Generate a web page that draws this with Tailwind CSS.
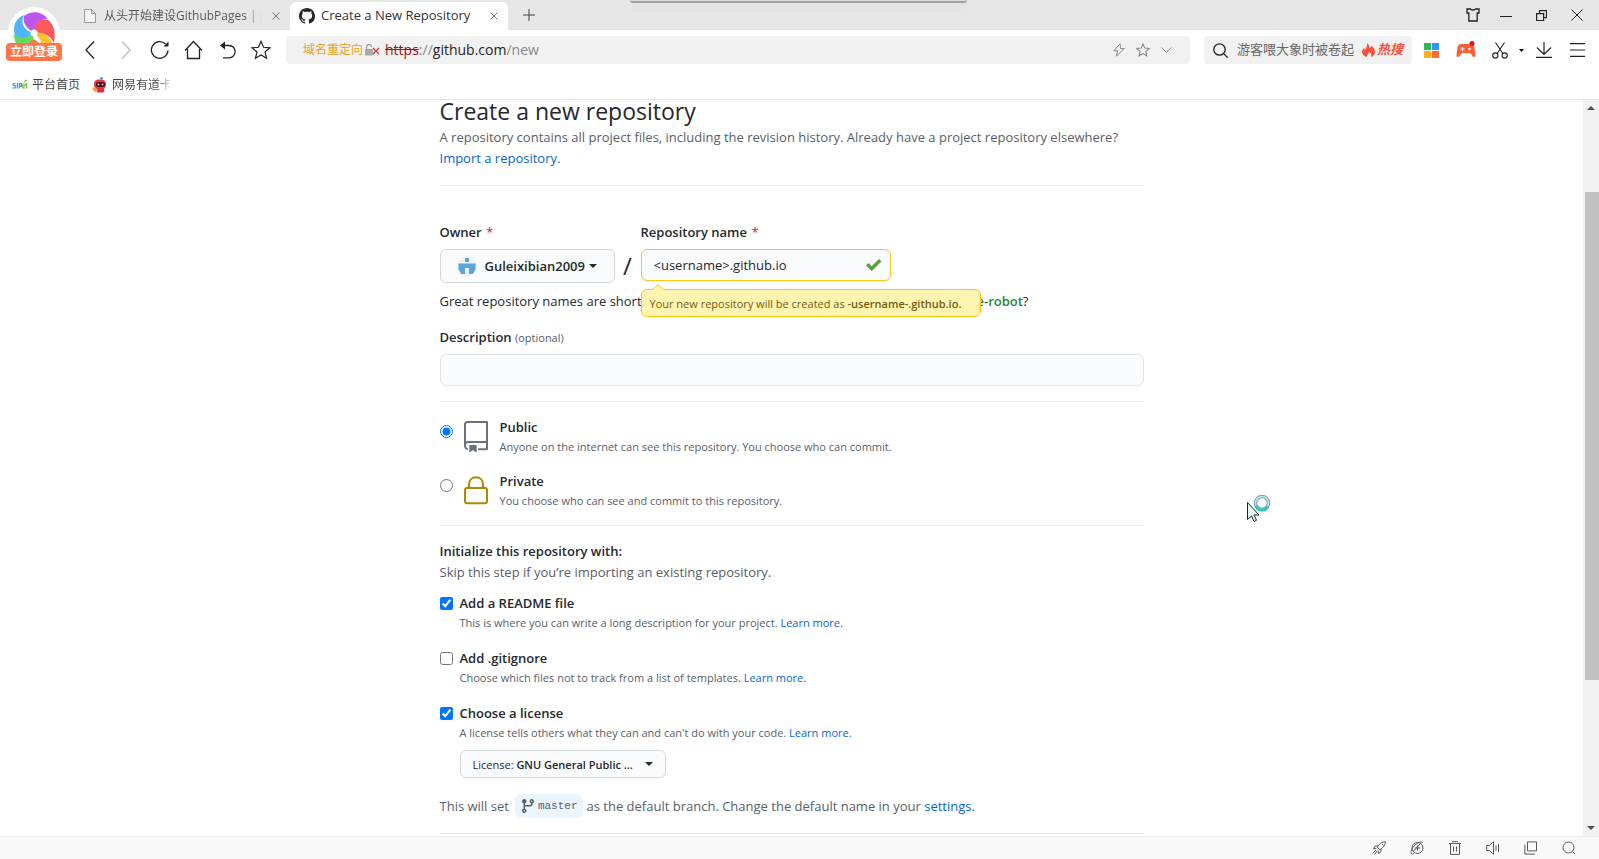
<!DOCTYPE html>
<html lang="en">
<head>
<meta charset="utf-8">
<title>Create a New Repository</title>
<script src="https://cdn.jsdelivr.net/npm/@tailwindcss/browser@4"></script>
</head>
<body class="flex h-screen flex-col overflow-hidden bg-white font-['Open_Sans','Noto_Sans_CJK_SC',sans-serif] text-[13px] text-[#24292e]">

<!-- Browser chrome -->
<header class="relative shrink-0 border-b border-[#e5e5e5]">
  <div class="absolute left-[630px] top-0 h-[3px] w-[337px] rounded-b border-b-2 border-[#a0a2a0] bg-[#dcdedc] shadow-md"></div>

  <div class="flex h-[30px] items-end bg-[#e6e6e6] pl-[76px] text-xs">
    <div class="flex h-7 w-[214px] items-center pl-2 text-[#666]">
      <svg class="mr-2 h-[14px] w-3 shrink-0" viewBox="0 0 12 14" fill="#f5f5f5" stroke="#999"><path d="M.5.5h7l4 4v9H.5zM7.500.5v4h4"/></svg>
      <span class="w-[158px] overflow-hidden whitespace-nowrap bg-linear-to-r from-[#555] from-90% to-transparent bg-clip-text text-transparent">从头开始建设GithubPages | g</span>
      <button class="ml-[10px]" aria-label="Close tab"><svg class="size-2" viewBox="0 0 8 8" stroke="#777"><path d="M.5.5l7 7M7.500.5l-7 7"/></svg></button>
    </div>
    <div class="flex h-7 w-[218px] items-center rounded-t-md bg-white pl-[9px] text-[13px] text-[#333]">
      <svg class="mr-[6px] size-4 shrink-0" viewBox="0 0 16 16" fill="#24292e"><path d="M8 0C3.580 0 0 3.580 0 8c0 3.540 2.290 6.530 5.470 7.590.4.070.550-.17.550-.38 0-.19-.010-.82-.010-1.490-2.010.370-2.530-.49-2.690-.94-.09-.23-.48-.94-.82-1.130-.28-.15-.68-.52-.010-.53.630-.010 1.080.580 1.230.820.720 1.210 1.870.870 2.330.660.070-.52.280-.87.510-1.070-1.780-.2-3.640-.89-3.640-3.950 0-.87.310-1.590.820-2.150-.08-.2-.36-1.020.080-2.120 0 0 .670-.21 2.200.820.640-.18 1.320-.27 2-.27s1.360.090 2 .270c1.530-1.040 2.200-.82 2.200-.82.440 1.100.160 1.920.080 2.120.510.560.820 1.270.820 2.150 0 3.070-1.870 3.750-3.650 3.950.290.250.540.730.540 1.480 0 1.070-.010 1.930-.010 2.200 0 .210.150.460.550.380A8.010 8.010 0 0016 8c0-4.420-3.580-8-8-8z"/></svg>
      <span class="w-[165px] whitespace-nowrap">Create a New Repository</span>
      <button class="ml-1" aria-label="Close tab"><svg class="size-2" viewBox="0 0 8 8" stroke="#777"><path d="M.5.5l7 7M7.500.5l-7 7"/></svg></button>
    </div>
    <button class="ml-[15px] self-center" aria-label="New tab"><svg class="size-3" viewBox="0 0 12 12" stroke="#444"><path d="M6 0v12M0 6h12"/></svg></button>
    <div class="ml-auto flex items-center gap-5 self-center pr-4">
      <button aria-label="Skins"><svg class="size-[14px]" viewBox="0 0 14 14" fill="none" stroke="#222" stroke-width="1.300"><path d="M1 1h3.500c.5 1.300 4.500 1.300 5 0H13v4h-1.800v8H2.800V5H1z"/></svg></button>
      <button aria-label="Minimise"><svg class="h-3 w-3" viewBox="0 0 12 12" stroke="#222"><path d="M0 7.500h12"/></svg></button>
      <button class="ml-1" aria-label="Restore"><svg class="size-[11px]" viewBox="0 0 11 11" fill="none" stroke="#222" stroke-width="1.200"><path d="M.6 3.600h7v7h-7zM3.500 3.500V.6h7v7H7.600"/></svg></button>
      <button class="ml-1" aria-label="Close"><svg class="size-3" viewBox="0 0 12 12" stroke="#222"><path d="M.5.5l11 11M11.500.5l-11 11"/></svg></button>
    </div>
  </div>

  <div class="flex h-10 items-center pl-[85px] pr-[14px]">
    <nav class="flex w-[201px] shrink-0 items-center" aria-label="Navigation">
      <button class="w-9" aria-label="Back"><svg class="h-[18px] w-[10px]" viewBox="0 0 10 18" fill="none" stroke="#222" stroke-width="1.300"><path d="M9 .5L1 9l8 8.500"/></svg></button>
      <button class="w-[29px]" aria-label="Forward"><svg class="h-[18px] w-[10px]" viewBox="0 0 10 18" fill="none" stroke="#bbb" stroke-width="1.300"><path d="M1 .5L9 9l-8 8.500"/></svg></button>
      <button class="w-[34px]" aria-label="Reload"><svg class="size-5" viewBox="0 0 20 20" fill="none" stroke="#222" stroke-width="1.300"><path d="M15.500 4A8.300 8.300 0 1 0 18 10.500"/><path d="M18.500 1.500v5h-5z" fill="#222" stroke="none"/></svg></button>
      <button class="w-9" aria-label="Home"><svg class="h-5 w-[19px]" viewBox="0 0 19 20" fill="none" stroke="#222" stroke-width="1.300"><path d="M1 10.500L9.500 1.500l8.500 9M3.500 9v9.500h12V9"/></svg></button>
      <button class="w-[31px]" aria-label="Undo"><svg class="h-[18px] w-4" viewBox="0 0 16 18" fill="none" stroke="#222" stroke-width="1.300"><path d="M3 4.500h6a6 6 0 0 1 0 12.300H3"/><path d="M0 4.500L5 .5v8z" fill="#222" stroke="none"/></svg></button>
      <button aria-label="Bookmark"><svg class="size-5" viewBox="0 0 20 20" fill="none" stroke="#222" stroke-width="1.200"><path d="M10 1.300l2.500 6 6.500.5-5 4.200 1.600 6.300L10 15l-5.600 3.300L6 12 1 7.800l6.500-.5z"/></svg></button>
    </nav>
    <div class="flex h-7 min-w-0 flex-1 items-center rounded-sm bg-[#f1f1f1] pl-[17px] pr-[18px]">
      <span class="text-xs text-[#f0a020]">域名重定向</span>
      <svg class="ml-[2px] mr-[5px] h-3 w-[15px]" viewBox="0 0 15 12"><path d="M1.500 5V3a2.500 2.500 0 0 1 5 0" fill="none" stroke="#999" stroke-width="1.200"/><rect y="5" width="8" height="6.500" rx="1" fill="#aaa"/><path d="M8 4l6 6M14 4l-6 6" stroke="#e03030" stroke-width="1.300"/></svg>
      <span class="whitespace-nowrap text-sm text-[#888]"><span class="text-[#9c1414] line-through">https</span>://<span class="text-[#222]">github.com</span>/new</span>
      <div class="ml-auto flex items-center gap-[11px] text-[#888]">
        <button aria-label="Turbo mode"><svg class="h-[14px] w-3" viewBox="0 0 12 14" fill="none" stroke="currentColor"><path d="M7 .8L.8 7.800h3.700L3.500 13.200l7.700-7.700H7.500z"/></svg></button>
        <button aria-label="Add to favourites"><svg class="size-[14px]" viewBox="0 0 20 20" fill="none" stroke="currentColor" stroke-width="1.500"><path d="M10 1.300l2.500 6 6.500.5-5 4.200 1.600 6.300L10 15l-5.600 3.300L6 12 1 7.800l6.500-.5z"/></svg></button>
        <button aria-label="Show history"><svg class="h-[6px] w-[11px]" viewBox="0 0 11 6" fill="none" stroke="currentColor"><path d="M.5.5l5 5 5-5"/></svg></button>
      </div>
    </div>
    <div class="ml-[14px] flex h-7 w-[208px] items-center rounded-sm bg-[#f1f1f1] pl-[9px] text-[#666]">
      <svg class="mr-[9px] size-[15px]" viewBox="0 0 15 15" fill="none" stroke="#222" stroke-width="1.300"><circle cx="6.500" cy="6.500" r="5.700"/><path d="M10.600 10.600l4 4"/></svg>
      <span class="w-[125px] whitespace-nowrap">游客喂大象时被卷起</span>
      <svg class="h-[14px] w-[13px]" viewBox="0 0 13 14" fill="#ff4f3c"><path d="M5 0c3 2.500 2 4 3 5 1-.5 1-1.500 1-2.500C12 4.500 13 7 13 9c0 2.500-1.500 4-4 5 1-2 0-4-2-5.500 0 2-2.500 3-2 5.500C2 13.500 0 11.500 0 9c0-2 1-3 2-4l.8 2C4.500 5 5.500 3 5 0z"/></svg>
      <span class="ml-[2px] font-bold italic text-[#ff4f3c]">热搜</span>
    </div>
    <div class="ml-3 flex items-center">
      <button class="w-8" aria-label="Apps"><svg class="size-[15px]" viewBox="0 0 15 15"><path fill="#2fb457" d="M0 0h7v7H0z"/><path fill="#2a97fb" d="M8 0h7v7H8z"/><path fill="#ffb119" d="M0 8h7v7H0z"/><path fill="#ff6a3c" d="M8 8h7v7H8z"/></svg></button>
      <button class="w-9" aria-label="Games"><svg class="h-[18px] w-5" viewBox="0 0 20 18"><path fill="#ff5f33" d="M5 3h10c3 0 3.500 3 4 7s1 6-1 6-2.500-4-5-4H7c-2.500 0-3 4-5 4s-1.500-2-1-6 1-7 4-7z"/><path stroke="#fff" stroke-width="1.200" d="M4.500 8h4M6.500 6v4"/><circle cx="13.500" cy="8" r="1.300" fill="#fff"/><circle cx="16" cy="2.500" r="2.500" fill="#e8141c"/></svg></button>
      <button class="flex w-11 items-center gap-[11px]" aria-label="Screenshot"><svg class="h-[17px] w-4" viewBox="0 0 16 17" fill="none" stroke="#222" stroke-width="1.100"><path d="M3.500.5l7.300 11M12.500.5l-7.300 11"/><circle cx="3.300" cy="13.500" r="2.600"/><circle cx="12.700" cy="13.500" r="2.600"/></svg><svg class="h-[3px] w-[5px]" viewBox="0 0 5 3"><path d="M0 0h5L2.500 3z"/></svg></button>
      <button class="w-[34px]" aria-label="Downloads"><svg class="size-4" viewBox="0 0 16 16" fill="none" stroke="#222" stroke-width="1.200"><path d="M8 0v12.500M1 5.500l7 7 7-7M0 15.400h16"/></svg></button>
      <button aria-label="Menu"><svg class="h-[14px] w-[15px]" viewBox="0 0 15 14" stroke="#222" stroke-width="1.200"><path d="M0 .6h15M0 7h15M0 13.400h15"/></svg></button>
    </div>
  </div>

  <div class="flex h-[29px] items-center pl-3 text-xs text-[#444]">
    <a href="#" class="flex items-center"><svg class="mr-1 h-3 w-4" viewBox="0 0 16 12" fill="none" stroke-width="1.200"><path stroke="#2a9fc8" d="M3.500 4.500H1.200v2h2v2.500H.5M5.300 4v5.500M7.300 9.500v-5h2v2.800h-2"/><path stroke="#7cc13e" d="M10 7h3.300V5H10.700v4h2.500M14.700 4v5.500M12 2.500l3-1.500"/></svg>平台首页</a>
    <a href="#" class="ml-3 flex items-center"><svg class="mr-1 size-4" viewBox="0 0 16 16"><rect x="2" y="2.500" width="12" height="10" rx="4.500" fill="#ee3350"/><rect x="5" y="11" width="7" height="4.500" rx="1" fill="#e22945"/><rect x="4" y="5" width="9" height="5" rx="2.500" fill="#32151c"/><circle cx="6.500" cy="7.500" r="1" fill="#ffc38a"/><circle cx="10.500" cy="7.500" r="1" fill="#ffc38a"/><circle cx="9.500" cy="1.300" r="1.300" fill="#4c8cf0"/><path fill="#ff9b2e" d="M0 12l3-2 3 3-3 2z"/></svg><span class="bg-linear-to-r from-[#444] from-75% to-transparent bg-clip-text text-transparent">网易有道卡</span></a>
  </div>

  <!-- Profile badge -->
  <button class="absolute left-[6px] top-[6px] flex h-[55px] w-14 flex-col items-center justify-end" aria-label="立即登录">
    <svg class="absolute left-[1px] top-0 size-[54px]" viewBox="0 0 54 54"><circle cx="27" cy="27" r="26" fill="#fff"/>
      <path fill="#4fb4fb" d="M27 27C17 25 13 17 17 9 9 12 5 20 8 29c4 5 12 4 19-2z"/>
      <path fill="#be55ee" d="M27 27c-6-4-12-9-10-17 7-6 18-5 24 3-6-1-13 4-14 14z"/>
      <path fill="#fb5a5c" d="M27 27c0-9 6-16 14-13 6 4 8 13 6 23-3-6-9-11-20-10z"/>
      <path fill="#ffbe2e" d="M27 27c9-2 15 2 19 12L34 45c2-8-1-14-7-18z"/>
      <path fill="#62d860" d="M27 27C20 33 12 33 7 28c0 6 2 10 6 14h12z"/>
      <circle cx="27" cy="27" r="3.500" fill="#fff"/></svg>
    <svg class="relative h-[5px] w-[10px]" viewBox="0 0 10 5" fill="#ff7547"><path d="M0 5l5-4 5 4z"/></svg>
    <span class="relative flex h-[18px] w-14 items-center justify-center rounded-sm bg-[#ff7547] text-xs font-bold text-white">立即登录</span>
  </button>
</header>

<!-- Page viewport -->
<div class="flex min-h-0 flex-1">
  <main class="min-w-0 flex-1 overflow-hidden">
    <form class="mx-auto -mt-[5px] max-w-[704px] leading-[21px]">
      <h1 class="text-[23px] leading-8">Create a new repository</h1>
      <p class="text-[#586069]">A repository contains all project files, including the revision history. Already have a project repository elsewhere?<br><a href="#" class="text-[#0366d6]">Import a repository.</a></p>
      <hr class="mb-9 mt-4 border-[#e8eaed]">

      <div class="relative flex items-start">
        <div class="flex w-[175px] flex-col gap-[6px]">
          <label for="owner" class="font-semibold">Owner <span class="ml-px font-medium text-[#cb2431]">*</span></label>
          <button id="owner" type="button" class="flex h-[34px] items-center whitespace-nowrap rounded-md border border-[#d5d8da] bg-[#fafbfc] pl-4 font-semibold">
            <svg class="mr-2 size-5 shrink-0" viewBox="0 0 20 20"><circle cx="10" cy="10" r="10" fill="#f0f0f0"/><path fill="#5aa6da" d="M8 2h4v4H8zM1.500 7.500h17V13l-2.500 5h-4v-6H8v6H4l-2.500-5z"/></svg>
            Guleixibian2009
            <svg class="ml-1 h-1 w-2" viewBox="0 0 8 4" fill="#24292e"><path d="M0 0h8L4 4z"/></svg>
          </button>
        </div>
        <div class="mt-7 w-[26px] text-center text-2xl leading-8">/</div>
        <div class="flex w-[250px] flex-col gap-[6px]">
          <label for="repo" class="font-semibold">Repository name <span class="ml-px font-medium text-[#cb2431]">*</span></label>
          <div class="flex h-8 items-center rounded-md border border-[#f9c513] bg-[#fafbfc] px-3">
            <input id="repo" type="text" value="&lt;username&gt;.github.io" class="min-w-0 flex-1 outline-none">
            <svg class="-mr-1 h-3 w-4" viewBox="0 0 16 12" fill="#55a532"><path d="M0 6.500L2.500 4l3.200 3.200L13 0l2.500 2.500L5.700 12z"/></svg>
          </div>
        </div>
        <div class="absolute left-[201px] top-[67px] h-7 min-w-[340px] whitespace-nowrap rounded-md border border-[#f9c513] bg-[#fff5b1] px-2 text-[11px] leading-7 text-[#735c0f]">
          <svg class="absolute -top-[6px] left-[10px] h-[6px] w-3" viewBox="0 0 12 6"><path d="M0 6l6-5.300L12 6" fill="#fff5b1" stroke="#f9c513"/></svg>
          Your new repository will be created as <b class="font-semibold">-username-.github.io.</b>
        </div>
      </div>
      <p class="mt-2 whitespace-nowrap">Great repository names are short and memorable. Need inspiration? How about <b class="font-semibold text-[#22863a]">adorable-robot</b>?</p>

      <label for="desc" class="mt-[15px] block font-semibold">Description <span class="text-[11px] font-medium text-[#586069]">(optional)</span></label>
      <input id="desc" type="text" class="mt-[6px] block h-8 w-full rounded-md border border-[#e1e4e8] bg-[#fafbfc] px-3">
      <hr class="my-[15px] border-[#e8eaed]">

      <div class="flex items-start">
        <input id="public" name="visibility" type="radio" checked class="mt-2 size-[13px] accent-[#0075ff]">
        <svg class="ml-[7px] mr-2 mt-1 size-8" viewBox="0 0 24 24" fill="#6a737d"><path d="M3 2.750A2.750 2.750 0 0 1 5.750 0h14.500a.75.75 0 0 1 .75.750v20.500a.75.75 0 0 1-.75.750h-6a.75.75 0 0 1 0-1.500h5.250v-4H6A1.500 1.500 0 0 0 4.500 18v.750c0 .716.430 1.334 1.050 1.605a.75.75 0 0 1-.6 1.374A3.251 3.251 0 0 1 3 18.750ZM19.500 1.500H5.750c-.69 0-1.250.560-1.250 1.250v12.651A2.989 2.989 0 0 1 6 15h13.500Z"/><path d="M7 18.250a.25.25 0 0 1 .25-.25h5a.25.25 0 0 1 .25.250v5.010a.25.25 0 0 1-.397.201l-2.206-1.604a.25.25 0 0 0-.294 0L7.397 23.460a.25.25 0 0 1-.397-.2z"/></svg>
        <label for="public"><span class="block font-semibold">Public</span><span class="block text-[11px] leading-[18px] text-[#586069]">Anyone on the internet can see this repository. You choose who can commit.</span></label>
      </div>
      <div class="mt-[15px] flex items-start">
        <input id="private" name="visibility" type="radio" class="mt-2 size-[13px] accent-[#0075ff]">
        <svg class="ml-[7px] mr-2 mt-1 size-8" viewBox="0 0 24 24" fill="none" stroke="#b08800" stroke-width="1.500"><rect x="3.750" y="9.750" width="16.500" height="11.500" rx="1.500"/><path d="M6.750 9.500V7c0-3 2-5.250 5.250-5.250S17.250 4 17.250 7v2.500"/></svg>
        <label for="private"><span class="block font-semibold">Private</span><span class="block text-[11px] leading-[18px] text-[#586069]">You choose who can see and commit to this repository.</span></label>
      </div>
      <hr class="my-[15px] border-[#e8eaed]">

      <h2 class="font-semibold">Initialize this repository with:</h2>
      <p class="text-[#586069]">Skip this step if you’re importing an existing repository.</p>

      <div class="mt-[10px] flex items-start gap-[7px]">
        <input id="readme" type="checkbox" checked class="mt-1 size-[13px] accent-[#0075ff]">
        <div><label for="readme" class="block font-semibold">Add a README file</label><p class="text-[11px] leading-[18px] text-[#586069]">This is where you can write a long description for your project. <a href="#" class="text-[#0366d6]">Learn more.</a></p></div>
      </div>
      <div class="mt-4 flex items-start gap-[7px]">
        <input id="ignore" type="checkbox" class="mt-1 size-[13px] accent-[#0075ff]">
        <div><label for="ignore" class="block font-semibold">Add .gitignore</label><p class="text-[11px] leading-[18px] text-[#586069]">Choose which files not to track from a list of templates. <a href="#" class="text-[#0366d6]">Learn more.</a></p></div>
      </div>
      <div class="mt-4 flex items-start gap-[7px]">
        <input id="license" type="checkbox" checked class="mt-1 size-[13px] accent-[#0075ff]">
        <div><label for="license" class="block font-semibold">Choose a license</label><p class="text-[11px] leading-[18px] text-[#586069]">A license tells others what they can and can't do with your code. <a href="#" class="text-[#0366d6]">Learn more.</a></p>
          <button type="button" class="mt-2 flex h-7 w-[206px] items-center justify-between whitespace-nowrap rounded-md border border-[#d5d8da] bg-[#fafbfc] px-3 text-[11px] font-medium"><span>License: <b class="font-semibold">GNU General Public ...</b></span><svg class="h-1 w-2" viewBox="0 0 8 4" fill="#24292e"><path d="M0 0h8L4 4z"/></svg></button>
        </div>
      </div>
      <p class="mt-4 flex h-6 items-center whitespace-nowrap text-[#586069]">This will set
        <span class="ml-[6px] mr-1 flex h-6 items-center rounded-md bg-[#eaf5ff] px-[5px] font-['Liberation_Mono',monospace] text-[11px]"><svg class="mr-[2px] size-4" viewBox="0 0 16 16" fill="#586069"><path d="M11.750 2.500a.75.75 0 100 1.500.75.75 0 000-1.500zm-2.250.750a2.250 2.250 0 113 2.122V6A2.500 2.500 0 0110 8.500H6a1 1 0 00-1 1v1.128a2.251 2.251 0 11-1.500 0V5.372a2.250 2.250 0 111.500 0v1.836A2.492 2.492 0 016 7h4a1 1 0 001-1v-.628A2.250 2.250 0 019.500 3.250zM4.250 12a.75.75 0 100 1.500.75.75 0 000-1.500zM3.500 3.250a.75.75 0 111.500 0 .75.75 0 01-1.500 0z"/></svg>master</span>
        <span>as the default branch. Change the default name in your <a href="#" class="text-[#0366d6]">settings</a>.</span></p>
      <hr class="mt-[15px] border-[#e1e4e8]">
    </form>
  </main>

  <!-- Scrollbar -->
  <div class="flex w-4 shrink-0 flex-col items-center bg-[#f1f1f1] py-[6px]">
    <svg class="h-1 w-2" viewBox="0 0 8 4" fill="#505050"><path d="M0 4h8L4 0z"/></svg>
    <div class="flex w-full flex-1 flex-col items-end pt-[82px]"><div class="h-[77%] w-[14px] bg-[#c1c1c1]"></div></div>
    <svg class="h-1 w-2" viewBox="0 0 8 4" fill="#505050"><path d="M0 0h8L4 4z"/></svg>
  </div>
</div>

<!-- Status bar -->
<footer class="flex h-[23px] shrink-0 items-center justify-end gap-6 border-t border-[#ececec] bg-[#f9f9f9] pr-[23px] text-[#555862]">
  <button aria-label="Boost"><svg class="size-[14px]" viewBox="0 0 14 14" fill="none" stroke="currentColor"><path d="M13.300.7c-3 0-5.500 1.500-8 5.500l2.500 2.500c4-2.500 5.500-5 5.500-8zM6 5H3.500L1.500 7.500l3 .3M9 8v2.500L6.500 12.500l-.3-3M4 9l-3.500 3.500M5 10l-2.500 3.500M10 3l1.500 1.500"/></svg></button>
  <button aria-label="Compatibility"><svg class="size-[14px]" viewBox="0 0 14 14" fill="none" stroke="currentColor"><circle cx="7.500" cy="7" r="5.500"/><path d="M12.500 1.500C10-.5 3 4 1.300 9.500.5 13 2 13.500 4 12.500M4.800 7h5.500M7.500 4.300v5.500M11 2L3.500 10"/></svg></button>
  <button aria-label="Clear data"><svg class="size-[14px]" viewBox="0 0 14 14" fill="none" stroke="currentColor"><path d="M4 .6h6M1 2.500h12M2.500 2.500v10.900h9V2.500M5.500 5.500v5M8.500 5.500v5"/></svg></button>
  <button aria-label="Sound"><svg class="size-[14px]" viewBox="0 0 14 14" fill="none" stroke="currentColor"><path d="M.6 4.500h2.800L7.500.8v12.400L3.400 9.500H.6zM10 4.500v5M12.500 3v8"/></svg></button>
  <button aria-label="Windows"><svg class="size-[14px]" viewBox="0 0 14 14" fill="none" stroke="currentColor"><path d="M3.500.9h9v9h-9zM.9 3.500v9.600h10"/></svg></button>
  <button aria-label="Zoom"><svg class="size-[14px]" viewBox="0 0 14 14" fill="none" stroke="currentColor"><circle cx="6.500" cy="6.500" r="5.500"/><path d="M10.500 10.500l2.500 2.500"/></svg></button>
</footer>

<!-- Busy pointer -->
<svg class="pointer-events-none absolute left-[1246px] top-[494px] h-7 w-6" viewBox="0 0 24 28"><circle cx="16" cy="9" r="6.500" fill="none" stroke="#7f9fb0" stroke-width="3.500"/><circle cx="16" cy="9" r="6.500" fill="none" stroke="#bfe8ee" stroke-width="1.500"/><path d="M9.800 11.500a6.500 6.500 0 0 0 12 1" fill="none" stroke="#2cc9b4" stroke-width="3"/><path d="M1.500 8.500v17l4-3.500 2.500 5.500 2.500-1.200L8 21h5z" fill="#e4fbef" stroke="#222"/></svg>
</body>
</html>
